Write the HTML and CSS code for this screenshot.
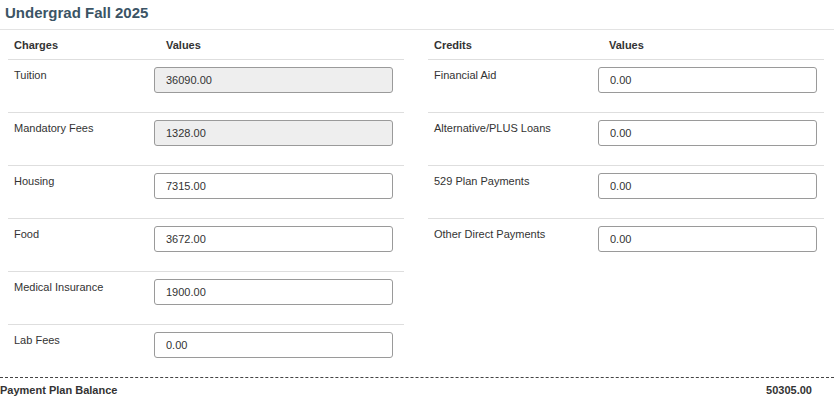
FILE: index.html
```html
<!DOCTYPE html>
<html>
<head>
<meta charset="utf-8">
<link rel="stylesheet" href="styles.css">
</head>
<body>
<h2 class="title">Undergrad Fall 2025</h2>
<div class="columns">
  <div class="table table-left">
    <div class="row head">
      <div class="cell label">Charges</div>
      <div class="cell value-head">Values</div>
    </div>
    <div class="row">
      <div class="cell label">Tuition</div>
      <div class="cell"><input class="amount readonly" value="36090.00" readonly></div>
    </div>
    <div class="row">
      <div class="cell label">Mandatory Fees</div>
      <div class="cell"><input class="amount readonly" value="1328.00" readonly></div>
    </div>
    <div class="row">
      <div class="cell label">Housing</div>
      <div class="cell"><input class="amount" value="7315.00"></div>
    </div>
    <div class="row">
      <div class="cell label">Food</div>
      <div class="cell"><input class="amount" value="3672.00"></div>
    </div>
    <div class="row">
      <div class="cell label">Medical Insurance</div>
      <div class="cell"><input class="amount" value="1900.00"></div>
    </div>
    <div class="row">
      <div class="cell label">Lab Fees</div>
      <div class="cell"><input class="amount" value="0.00"></div>
    </div>
  </div>
  <div class="table table-right">
    <div class="row head">
      <div class="cell label">Credits</div>
      <div class="cell value-head">Values</div>
    </div>
    <div class="row">
      <div class="cell label">Financial Aid</div>
      <div class="cell"><input class="amount" value="0.00"></div>
    </div>
    <div class="row">
      <div class="cell label">Alternative/PLUS Loans</div>
      <div class="cell"><input class="amount" value="0.00"></div>
    </div>
    <div class="row">
      <div class="cell label">529 Plan Payments</div>
      <div class="cell"><input class="amount" value="0.00"></div>
    </div>
    <div class="row">
      <div class="cell label">Other Direct Payments</div>
      <div class="cell"><input class="amount" value="0.00"></div>
    </div>
  </div>
</div>
<div class="balance">
  <span class="balance-label">Payment Plan Balance</span>
  <span class="balance-value">50305.00</span>
</div>
</body>
</html>
```
FILE: styles.css
```css
html, body {
  margin: 0;
  padding: 0;
  background: #fff;
}
body {
  font-family: "Liberation Sans", Arial, sans-serif;
  font-size: 11px;
  color: #333;
}
.title {
  margin: 0;
  height: 30px;
  box-sizing: border-box;
  padding: 4px 0 0 5px;
  font-size: 15px;
  line-height: 18px;
  font-weight: bold;
  color: #3b5465;
  border-bottom: 1px solid #e3e3e3;
}
.columns {
  display: grid;
  grid-template-columns: 396px 396px;
  column-gap: 24px;
  padding-left: 8px;
  align-items: start;
}
.table {
  display: flex;
  flex-direction: column;
}
.row {
  display: grid;
  border-top: 1px solid #dedede;
  height: 53px;
  box-sizing: border-box;
}
.row.head {
  border-top: none;
  height: 29px;
  font-weight: bold;
  align-items: center;
}
.table-left .row {
  grid-template-columns: 140px 1fr;
}
.table-right .row {
  grid-template-columns: 164px 1fr;
}
.cell {
  padding: 0 6px;
}
.row:not(.head) .cell {
  padding-top: 7px;
}
.row:not(.head) .label {
  padding-top: 9px;
  line-height: 13px;
}
.value-head {
  padding-left: 18px;
}
.table-right .value-head {
  padding-left: 17px;
}
.amount {
  display: block;
  box-sizing: border-box;
  height: 26px;
  padding: 0 11px;
  font-family: "Liberation Sans", Arial, sans-serif;
  font-size: 11px;
  color: #333;
  background: #fff;
  border: 1px solid #9a9a9a;
  border-radius: 3px;
  outline: none;
}
.table-left .amount {
  width: 239px;
}
.table-right .amount {
  width: 219px;
}
.amount.readonly {
  background: #eeeeee;
}
.balance {
  display: flex;
  justify-content: space-between;
  border-top: 1px dashed #444;
  padding: 6px 22px 0 0;
  font-weight: bold;
  line-height: 13px;
}
```
